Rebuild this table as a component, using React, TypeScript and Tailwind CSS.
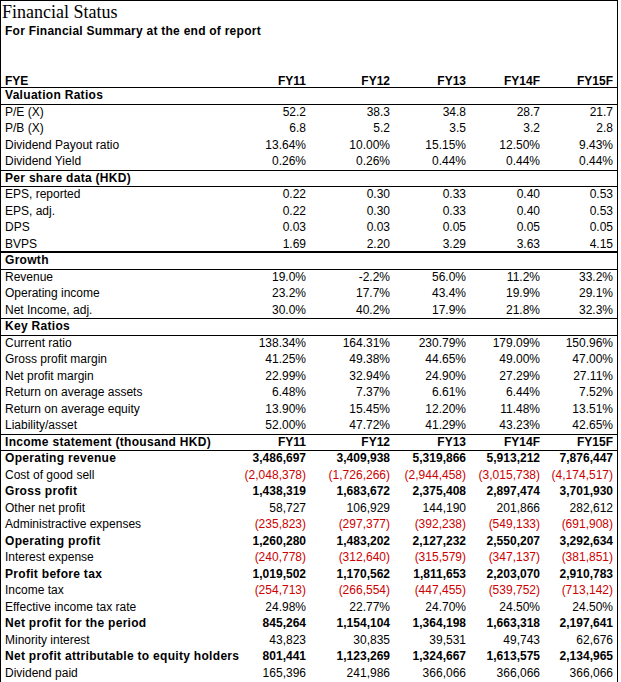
type Row = {
  label: string;
  values?: string[];
  bold?: boolean;
  red?: boolean;
  header?: boolean;
  line?: "thin" | "thick";
};

const YEARS = ["FY11", "FY12", "FY13", "FY14F", "FY15F"];
const COLS = ["w-[79px]", "w-[84px]", "w-[76px]", "w-[74px]", "w-[74px] pr-[4px]"];

const rows: Row[] = [
  { label: "Valuation Ratios", header: true, line: "thin" },
  { label: "P/E (X)", values: ["52.2", "38.3", "34.8", "28.7", "21.7"] },
  { label: "P/B (X)", values: ["6.8", "5.2", "3.5", "3.2", "2.8"] },
  { label: "Dividend Payout ratio", values: ["13.64%", "10.00%", "15.15%", "12.50%", "9.43%"] },
  { label: "Dividend Yield", values: ["0.26%", "0.26%", "0.44%", "0.44%", "0.44%"], line: "thin" },
  { label: "Per share data (HKD)", header: true, line: "thin" },
  { label: "EPS, reported", values: ["0.22", "0.30", "0.33", "0.40", "0.53"] },
  { label: "EPS, adj.", values: ["0.22", "0.30", "0.33", "0.40", "0.53"] },
  { label: "DPS", values: ["0.03", "0.03", "0.05", "0.05", "0.05"] },
  { label: "BVPS", values: ["1.69", "2.20", "3.29", "3.63", "4.15"], line: "thick" },
  { label: "Growth", header: true, line: "thin" },
  { label: "Revenue", values: ["19.0%", "-2.2%", "56.0%", "11.2%", "33.2%"] },
  { label: "Operating income", values: ["23.2%", "17.7%", "43.4%", "19.9%", "29.1%"] },
  { label: "Net Income, adj.", values: ["30.0%", "40.2%", "17.9%", "21.8%", "32.3%"], line: "thin" },
  { label: "Key Ratios", header: true, line: "thin" },
  { label: "Current ratio", values: ["138.34%", "164.31%", "230.79%", "179.09%", "150.96%"] },
  { label: "Gross profit margin", values: ["41.25%", "49.38%", "44.65%", "49.00%", "47.00%"] },
  { label: "Net profit margin", values: ["22.99%", "32.94%", "24.90%", "27.29%", "27.11%"] },
  { label: "Return on average assets", values: ["6.48%", "7.37%", "6.61%", "6.44%", "7.52%"] },
  { label: "Return on average equity", values: ["13.90%", "15.45%", "12.20%", "11.48%", "13.51%"] },
  { label: "Liability/asset", values: ["52.00%", "47.72%", "41.29%", "43.23%", "42.65%"], line: "thin" },
  { label: "Income statement (thousand HKD)", header: true, values: YEARS, bold: true, line: "thin" },
  { label: "Operating revenue", bold: true, values: ["3,486,697", "3,409,938", "5,319,866", "5,913,212", "7,876,447"] },
  { label: "Cost of good sell", red: true, values: ["(2,048,378)", "(1,726,266)", "(2,944,458)", "(3,015,738)", "(4,174,517)"] },
  { label: "Gross profit", bold: true, values: ["1,438,319", "1,683,672", "2,375,408", "2,897,474", "3,701,930"] },
  { label: "Other net profit", values: ["58,727", "106,929", "144,190", "201,866", "282,612"] },
  { label: "Administractive expenses", red: true, values: ["(235,823)", "(297,377)", "(392,238)", "(549,133)", "(691,908)"] },
  { label: "Operating profit", bold: true, values: ["1,260,280", "1,483,202", "2,127,232", "2,550,207", "3,292,634"] },
  { label: "Interest expense", red: true, values: ["(240,778)", "(312,640)", "(315,579)", "(347,137)", "(381,851)"] },
  { label: "Profit before tax", bold: true, values: ["1,019,502", "1,170,562", "1,811,653", "2,203,070", "2,910,783"] },
  { label: "Income tax", red: true, values: ["(254,713)", "(266,554)", "(447,455)", "(539,752)", "(713,142)"] },
  { label: "Effective income tax rate", values: ["24.98%", "22.77%", "24.70%", "24.50%", "24.50%"] },
  { label: "Net profit for the period", bold: true, values: ["845,264", "1,154,104", "1,364,198", "1,663,318", "2,197,641"] },
  { label: "Minority interest", values: ["43,823", "30,835", "39,531", "49,743", "62,676"] },
  { label: "Net profit attributable to equity holders", bold: true, values: ["801,441", "1,123,269", "1,324,667", "1,613,575", "2,134,965"] },
  { label: "Dividend paid", values: ["165,396", "241,986", "366,066", "366,066", "366,066"] },
];

function TableRow({ row }: { row: Row }) {
  const border =
    row.line === "thick" ? "border-b-2 border-black" : row.line === "thin" ? "border-b border-black" : "";
  const labelBold = row.bold || row.header;
  return (
    <div className={`flex h-[16.5px] items-start pt-[1px] leading-[13px] ${border}`}>
      <div className={`w-[229px] pl-[4px] whitespace-nowrap ${labelBold ? "font-bold tracking-[0.3px]" : ""}`}>
        {row.label}
      </div>
      {row.values?.map((v, i) => (
        <div
          key={i}
          className={`${COLS[i]} pr-[3px] text-right whitespace-nowrap ${row.bold ? "font-bold" : ""} ${
            row.red ? "text-[#cc0000]" : ""
          }`}
        >
          {v}
        </div>
      ))}
    </div>
  );
}

export default function App() {
  return (
    <div className="bg-white">
      <div className="w-[618px] border border-black text-[12px] text-black font-['Liberation_Sans',Arial,sans-serif]">
        <div className="h-[71px] pt-[1px]">
          <div className="h-[20px] pl-[1px] text-[18px] leading-[20px] font-['Liberation_Serif','Times_New_Roman',serif]">
            Financial Status
          </div>
          <div className="mt-[3px] pl-[4px] font-bold leading-[13px] tracking-[0.25px]">
            For Financial Summary at the end of report
          </div>
        </div>
        <div className="flex h-[16px] items-start border-b border-black pt-[2.5px] leading-[13px] font-bold">
          <div className="w-[229px] pl-[4px]">FYE</div>
          {YEARS.map((y, i) => (
            <div key={y} className={`${COLS[i]} pr-[3px] text-right`}>
              {y}
            </div>
          ))}
        </div>
        {rows.map((r) => (
          <TableRow key={r.label} row={r} />
        ))}
      </div>
    </div>
  );
}
